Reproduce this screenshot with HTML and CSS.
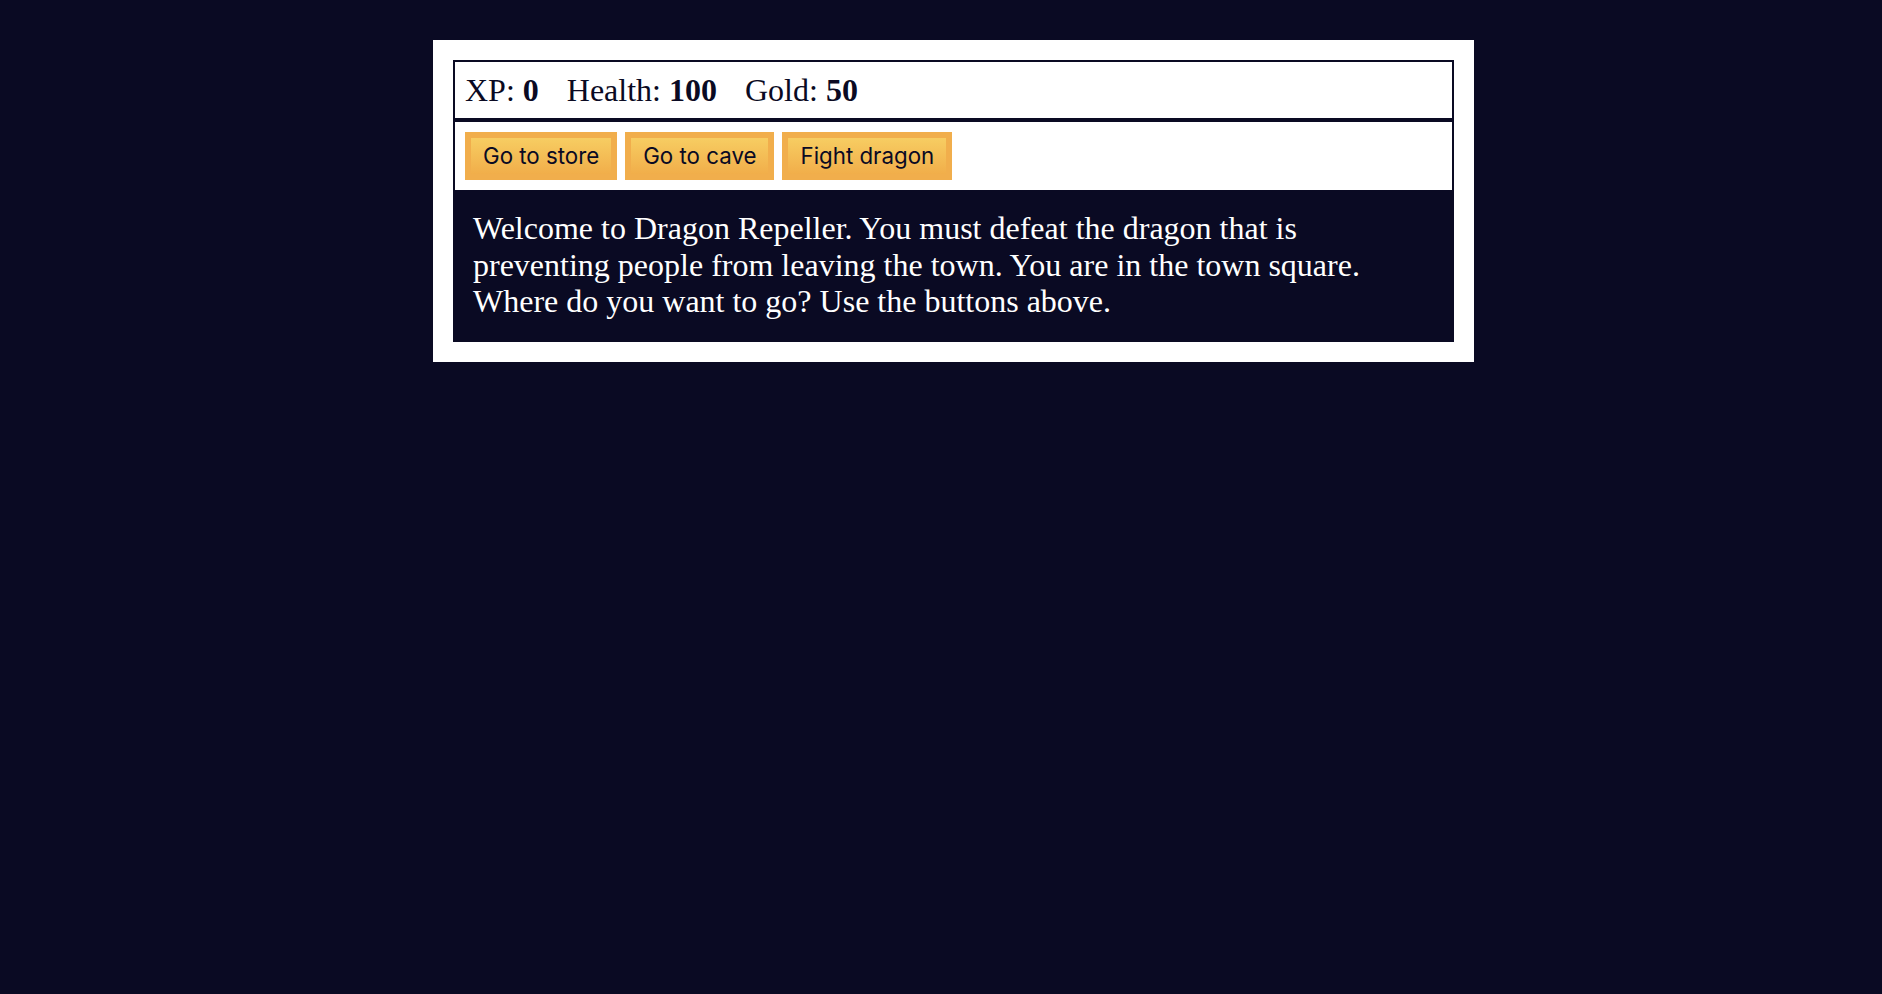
FILE: index.html
```html
<!DOCTYPE html>
<html lang="en">
<head>
<meta charset="utf-8">
<title>RPG - Dragon Repeller</title>
<link rel="stylesheet" href="styles.css">
</head>
<body>
<div class="game">
  <div class="stats">
    <span class="stat">XP: <strong>0</strong></span>
    <span class="stat">Health: <strong>100</strong></span>
    <span class="stat">Gold: <strong>50</strong></span>
  </div>
  <div class="controls">
    <button class="btn">Go to store</button>
    <button class="btn">Go to cave</button>
    <button class="btn">Fight dragon</button>
  </div>
  <div class="text">Welcome to Dragon Repeller. You must defeat the dragon that is preventing people from leaving the town. You are in the town square. Where do you want to go? Use the buttons above.</div>
</div>
</body>
</html>
```

FILE: styles.css
```css
html, body {
  background-color: #0a0a23;
}
body {
  margin: 0;
  padding: 40px 0 0 25px;
  font-family: "Liberation Serif", "Times New Roman", serif;
  font-size: 32px;
}
.game {
  width: 1001px;
  background-color: #ffffff;
  color: #ffffff;
  margin: 0 auto;
  padding: 20px;
}
.stats, .controls {
  border: 2px solid #0a0a23;
  padding: 10px;
  color: #0a0a23;
}
.stats {
  line-height: 36px;
}
.stat {
  padding-right: 20px;
}
.controls {
  display: flex;
  gap: 8px;
}
.btn {
  cursor: pointer;
  color: #0a0a23;
  background-color: #f1ae4c;
  background-image: linear-gradient(#f7cd62, #f1ae4a);
  border: 6px solid #f1ae4c;
  padding: 2px 12px;
  height: 48px;
  font-family: Inter, "Liberation Sans", sans-serif;
  font-size: 22.3px;
  line-height: 28px;
}
.text {
  background-color: #0a0a23;
  color: #ffffff;
  padding: 20px 20px 22px;
  line-height: 36.5px;
  margin-top: -2px;
}
```
